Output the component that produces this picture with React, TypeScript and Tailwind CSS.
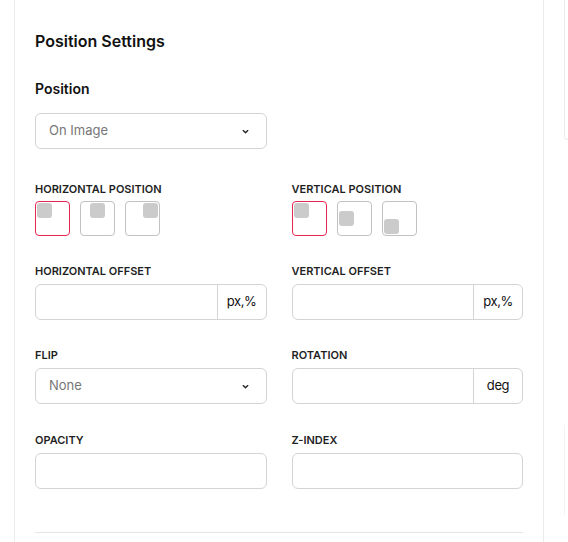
import React from "react";

const Chevron = () => (
  <svg width="9" height="9" viewBox="0 0 10 10" fill="none" className="text-[#222]">
    <path d="M2.5 4l2.5 2.5L7.5 4" stroke="currentColor" strokeWidth="1.5" strokeLinecap="round" strokeLinejoin="round" />
  </svg>
);

function Select({ value }: { value: string }) {
  return (
    <div className="flex h-[36px] w-full items-center justify-between rounded-[6px] border border-[#d4d4d4] bg-white pl-[13px] pr-[16px]">
      <span className="text-[13px] text-[#777]">{value}</span>
      <Chevron />
    </div>
  );
}

function Label({ children }: { children: React.ReactNode }) {
  return (
    <div className="mb-[5px] text-[11px] font-semibold uppercase leading-[16px] text-[#1f1f1f]">
      {children}
    </div>
  );
}

function AddonInput({ addon }: { addon?: string }) {
  return (
    <div className="flex h-[36px] w-full overflow-hidden rounded-[6px] border border-[#d4d4d4] bg-white">
      <div className="flex-1" />
      {addon && (
        <div className="flex w-[49px] items-center justify-center border-l border-[#d4d4d4] text-[13px] tracking-[-0.03em] text-[#111]">
          {addon}
        </div>
      )}
    </div>
  );
}

type Pos = "tl" | "tc" | "tr" | "ml" | "bl";

function PosBox({ pos, active }: { pos: Pos; active?: boolean }) {
  const place: Record<Pos, string> = {
    tl: "items-start justify-start",
    tc: "items-start justify-center",
    tr: "items-start justify-end",
    ml: "items-center justify-start",
    bl: "items-end justify-start",
  };
  return (
    <div
      className={`flex h-[35px] w-[35px] rounded-[4px] border p-[1px] ${place[pos]} ${
        active ? "border-[#e8254f]" : "border-[#c2c2c2]"
      }`}
    >
      <div className="h-[15px] w-[15px] rounded-[3px] bg-[#cbcbcb]" />
    </div>
  );
}

export default function App() {
  return (
    <div
      className="flex h-[542px] w-[568px] overflow-hidden bg-white"
      style={{ fontFamily: "Inter, 'Noto Sans', sans-serif" }}
    >
      <div className="ml-[14px] w-[530px] shrink-0 border-x border-[#ebebeb] px-[20px] pt-[29px]">
        <h2 className="text-[16px] font-semibold leading-[24px] text-[#111]">Position Settings</h2>
        <div className="mt-[26px] text-[14px] font-semibold leading-[20px] text-[#111]">Position</div>
        <div className="mt-[14px] w-[232px]">
          <Select value="On Image" />
        </div>

        <div className="mt-[32px] grid grid-cols-2 gap-x-[25px] gap-y-[27px]">
          <div>
            <Label>Horizontal Position</Label>
            <div className="-mt-[1px] flex gap-[10px]">
              <PosBox pos="tl" active />
              <PosBox pos="tc" />
              <PosBox pos="tr" />
            </div>
          </div>
          <div>
            <Label>Vertical Position</Label>
            <div className="-mt-[1px] flex gap-[10px]">
              <PosBox pos="tl" active />
              <PosBox pos="ml" />
              <PosBox pos="bl" />
            </div>
          </div>

          <div>
            <Label>Horizontal Offset</Label>
            <AddonInput addon="px,%" />
          </div>
          <div>
            <Label>Vertical Offset</Label>
            <AddonInput addon="px,%" />
          </div>

          <div>
            <Label>Flip</Label>
            <Select value="None" />
          </div>
          <div>
            <Label>Rotation</Label>
            <AddonInput addon="deg" />
          </div>

          <div className="mt-[1px]">
            <Label>Opacity</Label>
            <AddonInput />
          </div>
          <div className="mt-[1px]">
            <Label>Z-Index</Label>
            <AddonInput />
          </div>
        </div>

        <div className="mt-[43px] border-t border-[#e5e5e5]" />
      </div>

      <div className="ml-[20px] flex flex-1 flex-col">
        <div className="h-[140px] rounded-bl-[6px] border-b border-l border-[#ebebeb]" />
        <div className="mt-[285px] h-[90px] border-l border-[#f3f3f3]" />
      </div>
    </div>
  );
}
